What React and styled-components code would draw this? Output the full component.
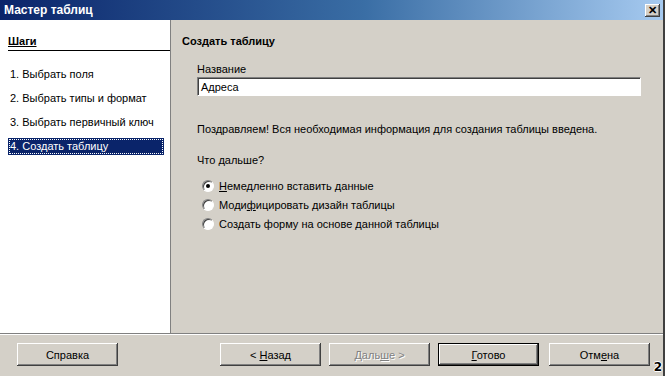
import styled, { createGlobalStyle } from "styled-components";

const Global = createGlobalStyle`
  html, body { margin: 0; padding: 0; background: #d4d0c8; }
  body { font-family: Tahoma, "Liberation Sans", "DejaVu Sans", sans-serif; }
`;

const Win = styled.div`
  position: relative;
  width: 665px;
  height: 376px;
  box-sizing: border-box;
  background: #d4d0c8;
  display: flex;
  flex-direction: column;
  border-right: 2px solid #404040;
  font-size: 11px;
  color: #000;
`;

const TitleBar = styled.div`
  height: 20px;
  display: flex;
  align-items: center;
  justify-content: space-between;
  padding: 0 3px 0 4px;
  background: linear-gradient(to right, #0a246a 0%, #3a6ea5 55%, #a6caf0 100%);
  color: #fff;
  font-weight: bold;
  font-size: 12px;
`;

const CloseBtn = styled.div`
  width: 15px;
  height: 13px;
  background: #d4d0c8;
  box-shadow: inset -1px -1px #404040, inset 1px 1px #fff, inset -2px -2px #808080;
  color: #000;
  font-size: 11px;
  line-height: 13px;
  text-align: center;
  font-family: "Liberation Sans", sans-serif;
`;

const Body = styled.div`
  display: flex;
  height: 313px;
  border-bottom: 1px solid #808080;
  box-shadow: 0 1px #fff;
`;

const Steps = styled.div`
  width: 171px;
  background: #fff;
  border-right: 1px solid #808080;
  padding: 14px 8px 0 8px;
  box-sizing: border-box;
`;

const StepsHead = styled.div`
  font-weight: bold;
  text-decoration: underline;
  border-bottom: 1px solid #000;
  padding-bottom: 2px;
  margin-right: -8px;
  margin-bottom: 15px;
  height: 14px;
  line-height: 14px;
`;

const Step = styled.div`
  height: 17px;
  line-height: 17px;
  margin-bottom: 7px;
  padding-left: 2px;
  width: 156px;
  box-sizing: border-box;
  background: ${(p) => (p.active ? "#0a246a" : "transparent")};
  color: ${(p) => (p.active ? "#fff" : "#000")};
  outline: ${(p) => (p.active ? "1px dotted #fff" : "none")};
  outline-offset: -2px;
`;

const Content = styled.div`
  flex: 1;
  padding: 14px 22px 0 11px;
  display: flex;
  flex-direction: column;
`;

const Heading = styled.div`
  font-weight: bold;
  height: 14px;
  line-height: 14px;
  margin-bottom: 14px;
`;

const Field = styled.div`
  padding-left: 15px;
  display: flex;
  flex-direction: column;
`;

const Label = styled.div`
  line-height: 14px;
  margin-bottom: 1px;
`;

const Input = styled.div`
  height: 19px;
  box-sizing: border-box;
  background: #fff;
  border: 1px solid;
  border-color: #808080 #fff #fff #808080;
  box-shadow: inset 1px 1px #404040;
  padding: 2px 3px;
  line-height: 14px;
`;

const Text = styled.div`
  padding-left: 15px;
  line-height: 14px;
  margin-top: ${(p) => p.top}px;
`;

const Radios = styled.div`
  padding-left: 20px;
  margin-top: 12px;
  display: flex;
  flex-direction: column;
  gap: 5px;
`;

const RadioRow = styled.div`
  display: flex;
  align-items: center;
  gap: 5px;
  height: 14px;
`;

const Radio = styled.span`
  width: 12px;
  height: 12px;
  border-radius: 50%;
  background: #fff;
  box-sizing: border-box;
  border: 1px solid;
  border-color: #808080 #fff #fff #808080;
  box-shadow: inset 1px 1px #404040;
  display: flex;
  align-items: center;
  justify-content: center;
  &::after {
    content: "";
    width: 4px;
    height: 4px;
    border-radius: 50%;
    background: ${(p) => (p.checked ? "#000" : "transparent")};
  }
`;

const U = styled.span`
  text-decoration: underline;
`;

const Footer = styled.div`
  flex: 1;
  display: flex;
  align-items: flex-start;
  padding: 9px 0 0 17px;
`;

const Button = styled.div`
  width: 101px;
  height: 23px;
  box-sizing: border-box;
  display: flex;
  align-items: center;
  justify-content: center;
  white-space: pre;
  background: #d4d0c8;
  color: ${(p) => (p.disabled ? "#808080" : "#000")};
  text-shadow: ${(p) => (p.disabled ? "1px 1px #fff" : "none")};
  margin-left: ${(p) => p.gap || 0}px;
  border: ${(p) => (p.primary ? "1px solid #000" : "none")};
  box-shadow: inset -1px -1px #404040, inset 1px 1px #fff, inset -2px -2px #808080;
`;

const Badge = styled.div`
  position: absolute;
  right: 1px;
  bottom: 3px;
  font-family: "DejaVu Sans", sans-serif;
  font-weight: bold;
  font-size: 12px;
  line-height: 12px;
  color: #000;
  text-shadow: 1px 0 #fff, -1px 0 #fff, 0 1px #fff, 0 -1px #fff;
`;

export default function App() {
  return (
    <Win>
      <Global />
      <TitleBar>
        <span>Мастер таблиц</span>
        <CloseBtn>✕</CloseBtn>
      </TitleBar>
      <Body>
        <Steps>
          <StepsHead>Шаги</StepsHead>
          <Step>1. Выбрать поля</Step>
          <Step>2. Выбрать типы и формат</Step>
          <Step>3. Выбрать первичный ключ</Step>
          <Step active>4. Создать таблицу</Step>
        </Steps>
        <Content>
          <Heading>Создать таблицу</Heading>
          <Field>
            <Label>Название</Label>
            <Input>Адреса</Input>
          </Field>
          <Text top={26}>Поздравляем! Вся необходимая информация для создания таблицы введена.</Text>
          <Text top={17}>Что дальше?</Text>
          <Radios>
            <RadioRow>
              <Radio checked />
              <span><U>Н</U>емедленно вставить данные</span>
            </RadioRow>
            <RadioRow>
              <Radio />
              <span>Моди<U>ф</U>ицировать дизайн таблицы</span>
            </RadioRow>
            <RadioRow>
              <Radio />
              <span>Создать форму на основе данной таблицы</span>
            </RadioRow>
          </Radios>
        </Content>
      </Body>
      <Footer>
        <Button><span>Справка</span></Button>
        <Button gap={102}><span>{"< "}<U>Н</U>азад</span></Button>
        <Button gap={8} disabled><span>Даль<U>ш</U>е{" >"}</span></Button>
        <Button gap={8} primary><span><U>Г</U>отово</span></Button>
        <Button gap={10}><span>Отм<U>е</U>на</span></Button>
      </Footer>
      <Badge>2</Badge>
    </Win>
  );
}
